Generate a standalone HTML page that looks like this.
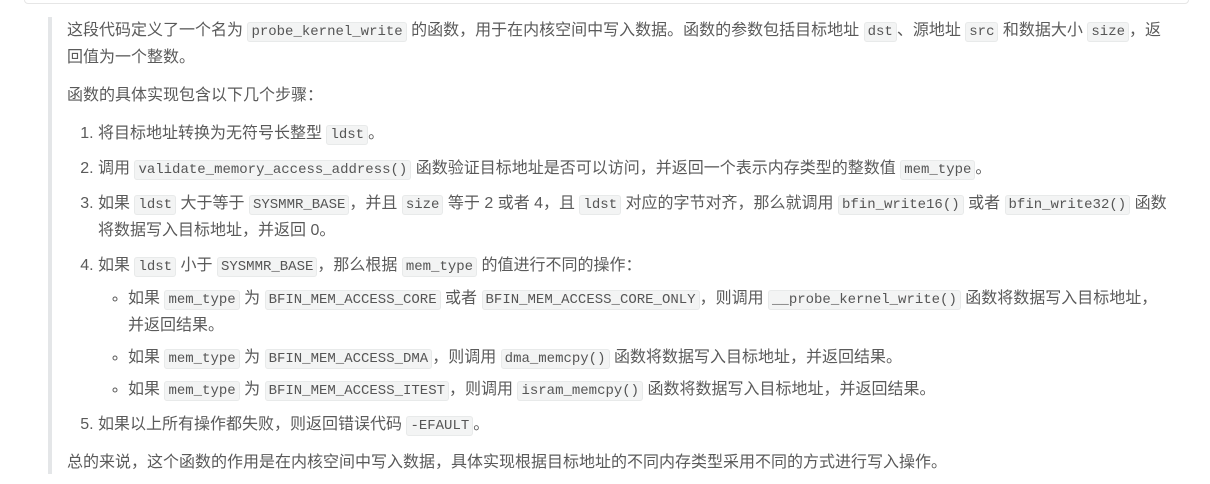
<!DOCTYPE html>
<html><head><meta charset="utf-8"><style>
html,body{margin:0;padding:0;background:#fff;width:1210px;height:484px;overflow:hidden}
body{font-family:"Liberation Sans","Noto Sans CJK SC",sans-serif;font-size:16px;color:#5a5a5a;line-height:27px}
.top{position:absolute;left:24px;top:-10px;width:1163px;height:12px;border:1px solid #e6e6e6;border-radius:4px;background:#fff}
.bq{position:absolute;left:48px;top:17px;width:1120px;height:457px;border-left:4px solid #e4e6e8;padding-left:15px;box-sizing:border-box}
p{margin:0 0 11px 0}
code{font-family:"Liberation Mono",monospace;font-size:14px;line-height:1;background:#f3f4f4;border:1px solid #e8eaea;border-radius:3px;padding:1px 3px;color:#555}
ol{margin:0 0 11px 0;padding-left:31px}
ol>li{margin:0 0 8px 0;padding-left:0}
ul{list-style:circle;margin:6px 0 0 0;padding-left:30px}
ul>li{margin:0 0 5px 0}
ul>li:last-child{margin-bottom:3px}
</style></head><body>
<div class="top"></div>
<div class="bq">
<p style="margin-top:0">这段代码定义了一个名为 <code>probe_kernel_write</code> 的函数，用于在内核空间中写入数据。函数的参数包括目标地址 <code>dst</code>、源地址 <code>src</code> 和数据大小 <code>size</code>，返回值为一个整数。</p>
<p>函数的具体实现包含以下几个步骤：</p>
<ol>
<li>将目标地址转换为无符号长整型 <code>ldst</code>。</li>
<li>调用 <code>validate_memory_access_address()</code> 函数验证目标地址是否可以访问，并返回一个表示内存类型的整数值 <code>mem_type</code>。</li>
<li>如果 <code>ldst</code> 大于等于 <code>SYSMMR_BASE</code>，并且 <code>size</code> 等于 2 或者 4，且 <code>ldst</code> 对应的字节对齐，那么就调用 <code>bfin_write16()</code> 或者 <code>bfin_write32()</code> 函数<br>将数据写入目标地址，并返回 0。</li>
<li>如果 <code>ldst</code> 小于 <code>SYSMMR_BASE</code>，那么根据 <code>mem_type</code> 的值进行不同的操作：
<ul>
<li>如果 <code>mem_type</code> 为 <code>BFIN_MEM_ACCESS_CORE</code> 或者 <code>BFIN_MEM_ACCESS_CORE_ONLY</code>，则调用 <code>__probe_kernel_write()</code> 函数将数据写入目标地址，<br>并返回结果。</li>
<li>如果 <code>mem_type</code> 为 <code>BFIN_MEM_ACCESS_DMA</code>，则调用 <code>dma_memcpy()</code> 函数将数据写入目标地址，并返回结果。</li>
<li>如果 <code>mem_type</code> 为 <code>BFIN_MEM_ACCESS_ITEST</code>，则调用 <code>isram_memcpy()</code> 函数将数据写入目标地址，并返回结果。</li>
</ul></li>
<li>如果以上所有操作都失败，则返回错误代码 <code>-EFAULT</code>。</li>
</ol>
<p>总的来说，这个函数的作用是在内核空间中写入数据，具体实现根据目标地址的不同内存类型采用不同的方式进行写入操作。</p>
</div>
</body></html>
